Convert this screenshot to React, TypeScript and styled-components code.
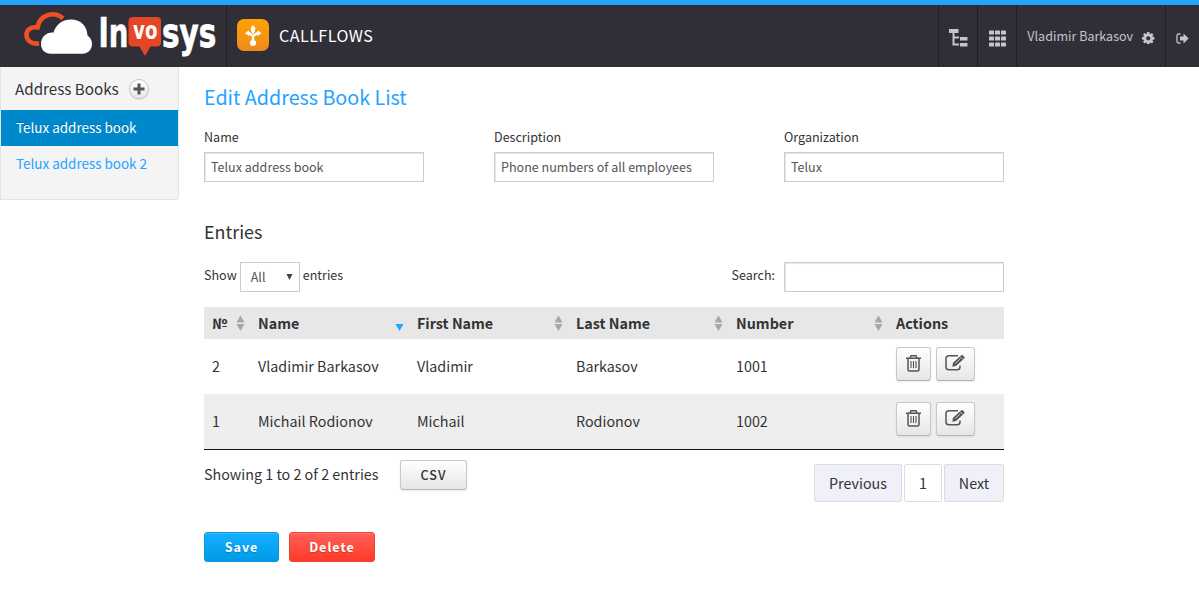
import React from 'react';
import styled, { createGlobalStyle, css } from 'styled-components';

const Global = createGlobalStyle`
  *, *::before, *::after { box-sizing: border-box; }
  body {
    margin: 0;
    background: #fff;
    color: #333;
    font-family: "Noto Sans CJK SC", "Noto Sans", sans-serif;
    font-size: 14.32px;
    line-height: 20px;
  }
  button, input { font-family: inherit; }
`;

const Header = styled.header`
  display: flex;
  height: 67px;
  border-top: 5px solid #24a3ff;
  background: #302f38;
  color: #fff;
`;

const Brand = styled.div`
  width: 227px;
  border-right: 1px solid #1f1e25;
`;

const LogoSvg = styled.svg`
  display: block;
`;

const AppTitle = styled.div`
  display: flex;
  align-items: center;
  flex: 1;
  gap: 10px;
  padding: 0 0 2px 10px;
  font-size: 16.1px;
  letter-spacing: 0.45px;
`;

const HeaderCell = styled.div<{ $width: number }>`
  display: flex;
  align-items: center;
  justify-content: center;
  width: ${(p) => p.$width}px;
  padding-top: 4px;
  border-left: 1px solid #1f1e25;
  color: #c4c4cc;
  font-size: 12.55px;
`;

const UserName = styled.span`
  margin: -4px 9px 0 0;
`;

const Body = styled.div`
  display: flex;
  align-items: flex-start;
`;

const Sidebar = styled.nav`
  width: 179px;
  height: 133px;
  border: 1px solid #e3e3e3;
  border-top: 0;
  border-radius: 0 0 4px 0;
  background: #f4f4f4;
`;

const SidebarHead = styled.div`
  display: flex;
  align-items: center;
  gap: 10px;
  height: 43px;
  padding: 0 0 2px 14px;
  font-size: 15.2px;
`;

const RoundButton = styled.button`
  display: flex;
  align-items: center;
  justify-content: center;
  width: 20px;
  height: 20px;
  margin-top: 3px;
  padding: 0;
  border: 1px solid #c6c6c6;
  border-radius: 50%;
  background: linear-gradient(#fff, #e8e8e8);
  box-shadow: 0 1px 1px rgba(0, 0, 0, 0.12);
`;

const SidebarItem = styled.a<{ $active?: boolean }>`
  display: block;
  height: 36px;
  padding-left: 15px;
  line-height: 35px;
  font-size: 13.45px;
  color: ${(p) => (p.$active ? '#fff' : '#24a3ff')};
  background: ${(p) => (p.$active ? '#0088cc' : 'transparent')};
  text-shadow: ${(p) => (p.$active ? '0 -1px 0 rgba(0,0,0,0.2)' : 'none')};
`;

const Main = styled.main`
  width: 800px;
  margin-left: 25px;
`;

const PageTitle = styled.h1`
  margin: 17px 0 17px;
  color: #24a3ff;
  font-size: 19.7px;
  font-weight: 400;
  line-height: 26px;
`;

const FieldRow = styled.div`
  display: flex;
  gap: 70px;
  margin-bottom: 34px;
`;

const Field = styled.label`
  display: flex;
  flex-direction: column;
  gap: 5px;
  width: 220px;
  font-size: 12.55px;
`;

const TextInput = styled.input`
  width: 220px;
  height: 30px;
  padding: 0 6px 2px;
  border: 1px solid #ccc;
  box-shadow: inset 1px 1px 1px rgba(0, 0, 0, 0.1);
  color: #555;
  font-size: 12.55px;
`;

const SectionTitle = styled.h2`
  margin: 0;
  font-size: 17.9px;
  font-weight: 400;
  line-height: 30px;
`;

const TableTools = styled.div`
  display: flex;
  align-items: flex-start;
  height: 45px;
  margin-top: 16px;
  font-size: 12.55px;
  line-height: 26px;
`;

const SelectBox = styled.div`
  display: flex;
  align-items: center;
  justify-content: space-between;
  width: 60px;
  height: 30px;
  margin: 0 3px;
  padding: 0 6px 0 10px;
  border: 1px solid #ccc;
  color: #555;
`;

const SearchLabel = styled.span`
  margin: 0 9px 0 auto;
`;

const Table = styled.div`
  border-bottom: 1px solid #111;
`;

const columns = '46px 159px 159px 160px 160px 116px';

const HeadRow = styled.div`
  display: grid;
  grid-template-columns: ${columns};
  height: 32px;
  background: #e7e7e7;
  font-weight: 700;
`;

const HeadCell = styled.div`
  display: flex;
  align-items: center;
  justify-content: space-between;
  padding: 0 5px 0 8px;
`;

const Row = styled.div<{ $shaded?: boolean }>`
  display: grid;
  grid-template-columns: ${columns};
  height: 55px;
  background: ${(p) => (p.$shaded ? '#eee' : '#fff')};
`;

const Cell = styled.div`
  padding: 17px 8px 0;
`;

const Actions = styled.div`
  display: flex;
  gap: 5px;
  padding: 8px;
`;

const raised = css`
  border: 1px solid #c8c8c8;
  border-bottom-color: #b3b3b3;
  border-radius: 3px;
  background: linear-gradient(#fff, #e6e6e6);
  box-shadow: 0 1px 2px rgba(0, 0, 0, 0.08);
  color: #333;
`;

const IconButton = styled.button<{ $width: number }>`
  ${raised}
  display: flex;
  justify-content: center;
  width: ${(p) => p.$width}px;
  height: 34px;
  padding: 6px 1px 0 0;
`;

const TableFooter = styled.div`
  display: flex;
  align-items: flex-start;
  height: 82px;
  padding-top: 10px;
`;

const Info = styled.span`
  width: 196px;
  padding-top: 4px;
`;

const CsvButton = styled.button`
  ${raised}
  width: 67px;
  height: 30px;
  padding: 0 0 2px;
  font-size: 12.55px;
  font-weight: 500;
  letter-spacing: 1px;
`;

const Pager = styled.div`
  display: flex;
  gap: 2px;
  margin: 4px 0 0 auto;
`;

const PageButton = styled.button<{ $width: number; $current?: boolean }>`
  width: ${(p) => p.$width}px;
  height: 38px;
  padding: 0 0 2px;
  border: 1px solid #ddd;
  border-radius: 2px;
  background: ${(p) => (p.$current ? '#fff' : '#f0f0f8')};
  color: #333;
  font-size: 14.32px;
`;

const FormActions = styled.div`
  display: flex;
  gap: 10px;
`;

const ActionButton = styled.button<{ $danger?: boolean }>`
  width: ${(p) => (p.$danger ? 86 : 75)}px;
  height: 30px;
  padding: 0 0 2px;
  border: 1px solid ${(p) => (p.$danger ? '#f9402f' : '#0d97e2')};
  border-radius: 3px;
  background: ${(p) =>
    p.$danger ? 'linear-gradient(#ff5f5b, #ff3a26)' : 'linear-gradient(#14b0ff, #009ae6)'};
  box-shadow: inset 0 1px 0 rgba(255, 255, 255, 0.15);
  color: #fff;
  font-size: 12.55px;
  font-weight: 700;
  letter-spacing: 1px;
  text-shadow: 0 1px 1px rgba(0, 0, 0, 0.2);
`;

const Logo = () => (
  <LogoSvg width="226" height="62" viewBox="0 5 226 62">
    <path
      d="M39 43.5C31 44.500 26.500 40 26.500 35C26.500 29.500 31 26.500 37.500 27.500C40 13.500 55 11 63 18.500"
      fill="none"
      stroke="#f04e23"
      strokeWidth="4.600"
    />
    <path
      d="M51 53.700C44.500 53.700 41 49.500 41 44C41 37 46 32 53.500 32.500C56 24 63 19.500 71 19.500C81 19.500 87 26 87.500 35.500C90.500 37.500 92 40.500 92 44C92 49.500 88 53.700 82.500 53.700Z"
      fill="#fff"
      stroke="#302f38"
      strokeWidth="1.500"
      paintOrder="stroke"
    />
    <path
      d="M133 17H157Q161 17 161 21V42.500Q161 46.500 157 46.500H150.500L145 56L139.500 46.500H133Q128.500 46.500 128.500 42.500V21Q128.500 17 133 17Z"
      fill="#e64626"
    />
    <g fill="#fff" stroke="#fff" fontFamily="DejaVu Sans" fontWeight="700">
      <text transform="translate(98.500 46.500) scale(0.69 1)" fontSize="40" strokeWidth="0.600">In</text>
      <text transform="translate(133 39) scale(0.73 1)" fontSize="25" strokeWidth="0">vo</text>
      <text transform="translate(162 46.500) scale(0.735 1)" fontSize="40" strokeWidth="0.800">sys</text>
    </g>
  </LogoSvg>
);

const CallflowIcon = () => (
  <svg width="32" height="32" viewBox="0 0 32 32">
    <defs>
      <linearGradient id="cf" x1="0" y1="0" x2="0" y2="1">
        <stop offset="0" stopColor="#ffa200" />
        <stop offset="1" stopColor="#ee8b1c" />
      </linearGradient>
    </defs>
    <rect width="32" height="32" rx="7" fill="url(#cf)" />
    <path d="M16 10V14.500M16 21.500V18.500Q16.500 15 21 14.500M11 14Q14 14.500 15 17" stroke="#fff" strokeWidth="2.400" fill="none" />
    <g fill="#fff">
      <circle cx="16" cy="24" r="3.100" />
      <path d="M16 6L18.500 9L17.500 13H14.500L13.500 9ZM8 14.300L11.500 11.500L13 14L12 17ZM24.500 14.300L21 11.500L19.500 14L20.500 17Z" />
    </g>
  </svg>
);

const TreeIcon = () => (
  <svg width="20" height="20" viewBox="-1 0 20 20" fill="none">
    <path d="M4.500 4V16.500H10M4.500 9.500H10" stroke="currentColor" strokeWidth="2" />
    <path d="M0 1H9.500V5H0ZM11 9H18.500V12.500H11ZM11 15H18.500V18.500H11Z" fill="currentColor" />
  </svg>
);

const GridIcon = () => (
  <svg width="17" height="17" viewBox="0 0 17 17" fill="currentColor">
    {[0.5, 6.5, 12.5].map((y) => [0, 6, 12].map((x) => <rect key={`${x}-${y}`} x={x} y={y} width="5" height="4" rx="0.600" />))}
  </svg>
);

const GearIcon = () => (
  <svg width="12.500" height="12.500" viewBox="0 0 1536 1536" fill="currentColor">
    <path d="M1024 768q0-106-75-181t-181-75-181 75-75 181 75 181 181 75 181-75 75-181zm512-109v222q0 12-8 23t-20 13l-185 28q-19 54-39 91 35 50 107 138 10 12 10 25t-9 23q-27 37-99 108t-94 71q-12 0-26-9l-138-108q-44 23-91 38-16 136-29 186-7 28-36 28H657q-14 0-24.500-8.500T621 1506l-28-184q-49-16-90-37l-141 107q-10 9-25 9-14 0-25-11-126-114-165-168-7-10-7-23 0-12 8-23 15-21 51-66.500t54-70.500q-27-50-41-99L29 913q-13-2-21-12.500T0 877V655q0-12 8-23t19-13l186-28q14-46 39-92-40-57-107-138-10-12-10-24 0-10 9-23 26-36 98.500-107.500T337 135q13 0 26 10l138 107q44-23 91-38 16-136 29-186 7-28 36-28h222q14 0 24.500 8.500T915 30l28 184q49 16 90 37l142-107q9-9 24-9 13 0 25 10 129 119 165 170 7 8 7 22 0 12-8 23-15 21-51 66.500t-54 70.500q26 50 41 98l183 28q13 2 21 12.500t8 23.500z" />
  </svg>
);

const LogoutIcon = () => (
  <svg width="13" height="11" viewBox="0 0 13 11">
    <path d="M4.500 1H2.500Q1 1 1 2.500V8.500Q1 10 2.500 10H4.500" fill="none" stroke="currentColor" strokeWidth="1.300" />
    <path d="M4 3.500H7.500V0.500L12.700 5.500L7.500 10.500V7.500H4Z" fill="currentColor" />
  </svg>
);

const PlusIcon = () => (
  <svg width="12" height="12" viewBox="0 0 12 12">
    <path d="M6 0.500V11.500M0.500 6H11.500" stroke="#555" strokeWidth="3" />
  </svg>
);

const SortIcon = ({ sorted }: { sorted?: boolean }) =>
  sorted ? (
    <svg width="9" height="16" viewBox="0 0 9 16">
      <path d="M0.500 9H8.500L4.500 16Z" fill="#24a3ff" />
    </svg>
  ) : (
    <svg width="9" height="16" viewBox="0 0 9 16">
      <path d="M0.500 7.500H8.500L4.500 0.500ZM0.500 9H8.500L4.500 16Z" fill="#a6a6a6" />
    </svg>
  );

const TrashIcon = () => (
  <svg width="17" height="18" viewBox="0 0 17 18" fill="none" stroke="#555" strokeWidth="1.500">
    <path d="M1 4.200H16M5 4L6 1.700H11L12 4M3 4.500V15.500Q3 17 4.500 17H12.500Q14 17 14 15.500V4.500" />
    <path d="M6 7V14M8.500 7V14M11 7V14" strokeWidth="1.100" />
  </svg>
);

const EditIcon = () => (
  <svg width="20" height="18" viewBox="0 0 20 18" fill="none">
    <path d="M13 1.700H4Q1 1.700 1 4.500V13Q1 15.800 4 15.800H12Q15 15.800 15 13V11.500" stroke="#555" strokeWidth="1.500" />
    <path d="M7.300 12.700L8 8.800L16 1.400Q17 0.600 18 1.600L19.200 2.800Q20 3.600 19.200 4.500L11 12Z" fill="#555" />
    <path d="M10.200 9.600L15.200 4.900M15 2.600L18 5.600" stroke="#f4f4f4" strokeWidth="0.700" />
  </svg>
);

const fields = [
  { label: 'Name', value: 'Telux address book' },
  { label: 'Description', value: 'Phone numbers of all employees' },
  { label: 'Organization', value: 'Telux' },
];

const heads = ['№', 'Name', 'First Name', 'Last Name', 'Number', 'Actions'];

const rows = [
  ['2', 'Vladimir Barkasov', 'Vladimir', 'Barkasov', '1001'],
  ['1', 'Michail Rodionov', 'Michail', 'Rodionov', '1002'],
];

export default function App() {
  return (
    <>
      <Global />
      <Header>
        <Brand><Logo /></Brand>
        <AppTitle><CallflowIcon />CALLFLOWS</AppTitle>
        <HeaderCell $width={39}><TreeIcon /></HeaderCell>
        <HeaderCell $width={39}><GridIcon /></HeaderCell>
        <HeaderCell $width={149}><UserName>Vladimir Barkasov</UserName><GearIcon /></HeaderCell>
        <HeaderCell $width={34}><LogoutIcon /></HeaderCell>
      </Header>
      <Body>
        <Sidebar>
          <SidebarHead>Address Books<RoundButton><PlusIcon /></RoundButton></SidebarHead>
          <SidebarItem $active>Telux address book</SidebarItem>
          <SidebarItem>Telux address book 2</SidebarItem>
        </Sidebar>
        <Main>
          <PageTitle>Edit Address Book List</PageTitle>
          <FieldRow>
            {fields.map((f) => (
              <Field key={f.label}>{f.label}<TextInput defaultValue={f.value} /></Field>
            ))}
          </FieldRow>
          <SectionTitle>Entries</SectionTitle>
          <TableTools>
            Show
            <SelectBox>
              All
              <svg width="7" height="6" viewBox="0 0 7 6"><path d="M0.500 0H6.500L3.500 6Z" fill="#444" /></svg>
            </SelectBox>
            entries
            <SearchLabel>Search:</SearchLabel>
            <TextInput />
          </TableTools>
          <Table>
            <HeadRow>
              {heads.map((h, i) => (
                <HeadCell key={h}>{h}{i < 5 && <SortIcon sorted={i === 1} />}</HeadCell>
              ))}
            </HeadRow>
            {rows.map((r, i) => (
              <Row key={r[0]} $shaded={i === 1}>
                {r.map((c) => <Cell key={c}>{c}</Cell>)}
                <Actions>
                  <IconButton $width={35}><TrashIcon /></IconButton>
                  <IconButton $width={39}><EditIcon /></IconButton>
                </Actions>
              </Row>
            ))}
          </Table>
          <TableFooter>
            <Info>Showing 1 to 2 of 2 entries</Info>
            <CsvButton>CSV</CsvButton>
            <Pager>
              <PageButton $width={88}>Previous</PageButton>
              <PageButton $width={38} $current>1</PageButton>
              <PageButton $width={60}>Next</PageButton>
            </Pager>
          </TableFooter>
          <FormActions>
            <ActionButton>Save</ActionButton>
            <ActionButton $danger>Delete</ActionButton>
          </FormActions>
        </Main>
      </Body>
    </>
  );
}
